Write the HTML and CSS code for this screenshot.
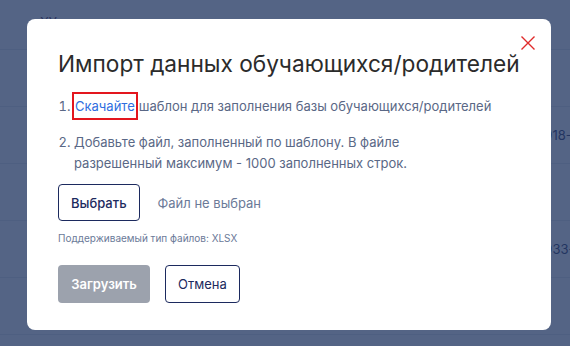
FILE: index.html
```html
<!DOCTYPE html>
<html lang="ru">
<head>
    <meta charset="UTF-8">
    <meta name="viewport" content="width=device-width, initial-scale=1.0">
    <title>Импорт данных</title>
    <link rel="stylesheet" href="styles.css">
</head>
<body>
    <div class="table">
        <div class="row head"><span class="cell name">ХУченик</span><span class="cell phone"></span></div>
        <div class="row"><span class="cell name"></span><span class="cell phone"></span></div>
        <div class="row"><span class="cell name">Иванов Иван</span><span class="cell phone">+7 918-650-12-40</span></div>
        <div class="row"><span class="cell name"></span><span class="cell phone"></span></div>
        <div class="row"><span class="cell name">Петрова Анна</span><span class="cell phone">+7 933-310-22-11</span></div>
        <div class="row"><span class="cell name"></span><span class="cell phone"></span></div>
    </div>

    <div class="overlay"></div>

    <div class="modal">
        <button class="close" aria-label="Закрыть">
            <svg width="16" height="16" viewBox="0 0 16 16"><path d="M1.5 1.5L14.5 14.5M14.5 1.5L1.5 14.5" stroke="#e02a2a" stroke-width="1.4" fill="none"/></svg>
        </button>
        <h1 class="title">Импорт данных обучающихся/родителей</h1>
        <ol class="steps">
            <li><a href="#" class="link">Скачайте</a>шаблон для заполнения базы обучающихся/родителей</li>
            <li class="narrow">Добавьте файл, заполненный по шаблону. В файле разрешенный максимум - 1000 заполненных строк.</li>
        </ol>
        <div class="file-row">
            <button class="btn outline">Выбрать</button>
            <span class="file-name">Файл не выбран</span>
        </div>
        <p class="hint">Поддерживаемый тип файлов: XLSX</p>
        <div class="actions">
            <button class="btn disabled">Загрузить</button>
            <button class="btn outline normal">Отмена</button>
        </div>
    </div>
</body>
</html>
```

FILE: styles.css
```css
* {
    box-sizing: border-box;
}
body {
    margin: 0;
    font-family: 'Inter', 'Liberation Sans', sans-serif;
    background: #ffffff;
    width: 570px;
    height: 346px;
    overflow: hidden;
    position: relative;
}
.table {
    display: flex;
    flex-direction: column;
}
.row {
    display: flex;
    height: 57px;
    border-bottom: 1px solid #e4e7ee;
    align-items: center;
    font-size: 13px;
    color: #1f2c5c;
}
.row.head {
    height: 50px;
    align-items: flex-start;
    padding-top: 14px;
    color: #4a1d4f;
}
.cell.name {
    flex-shrink: 0;
    width: 525px;
    padding-left: 40px;
}
.cell.phone {
    white-space: nowrap;
}
.overlay {
    position: absolute;
    inset: 0;
    background: rgba(36, 56, 99, 0.78);
}
.modal {
    position: absolute;
    left: 27px;
    top: 19px;
    width: 524px;
    height: 311px;
    background: #ffffff;
    border-radius: 8px;
    padding: 30px 20px 0 31px;
}
.close {
    position: absolute;
    top: 16px;
    right: 15px;
    border: none;
    background: none;
    padding: 0;
    width: 16px;
    height: 16px;
    cursor: pointer;
}
.close svg {
    display: block;
}
.title {
    margin: 0;
    font-size: 22.65px;
    line-height: 29px;
    font-weight: 400;
    color: #2b2b2b;
    white-space: nowrap;
}
.steps {
    margin: 18px 0 0;
    padding: 0 0 0 16px;
    font-size: 13px;
    line-height: 21px;
    color: #5a6886;
}
.steps li + li {
    margin-top: 15px;
}
.steps li.narrow {
    max-width: 372px;
}
.link {
    display: inline-block;
    color: #2f6ee0;
    text-decoration: none;
    border: 2px solid #e3161e;
    line-height: 20px;
    padding: 2px 1px;
    margin: -4px 1px -4px -2px;
}
.file-row {
    display: flex;
    align-items: center;
    gap: 18px;
    margin-top: 10px;
}
.btn {
    font-family: inherit;
    font-size: 13px;
    font-weight: 500;
    border-radius: 4px;
    cursor: pointer;
}
.btn.outline {
    background: #ffffff;
    border: 1px solid #1c2a5e;
    color: #1c2a5e;
    height: 37px;
    padding: 0 12px;
}
.btn.normal {
    font-weight: 400;
    height: 38px;
    padding: 0 12px;
}
.btn.disabled {
    background: #9ca2ad;
    border: none;
    color: #ffffff;
    font-weight: 600;
    height: 38px;
    width: 92px;
    cursor: default;
}
.file-name {
    font-size: 13px;
    color: #6b7a98;
}
.hint {
    margin: 10px 0 0;
    font-size: 10px;
    line-height: 14px;
    color: #6b7a98;
}
.actions {
    display: flex;
    gap: 15px;
    margin-top: 20px;
}
```
